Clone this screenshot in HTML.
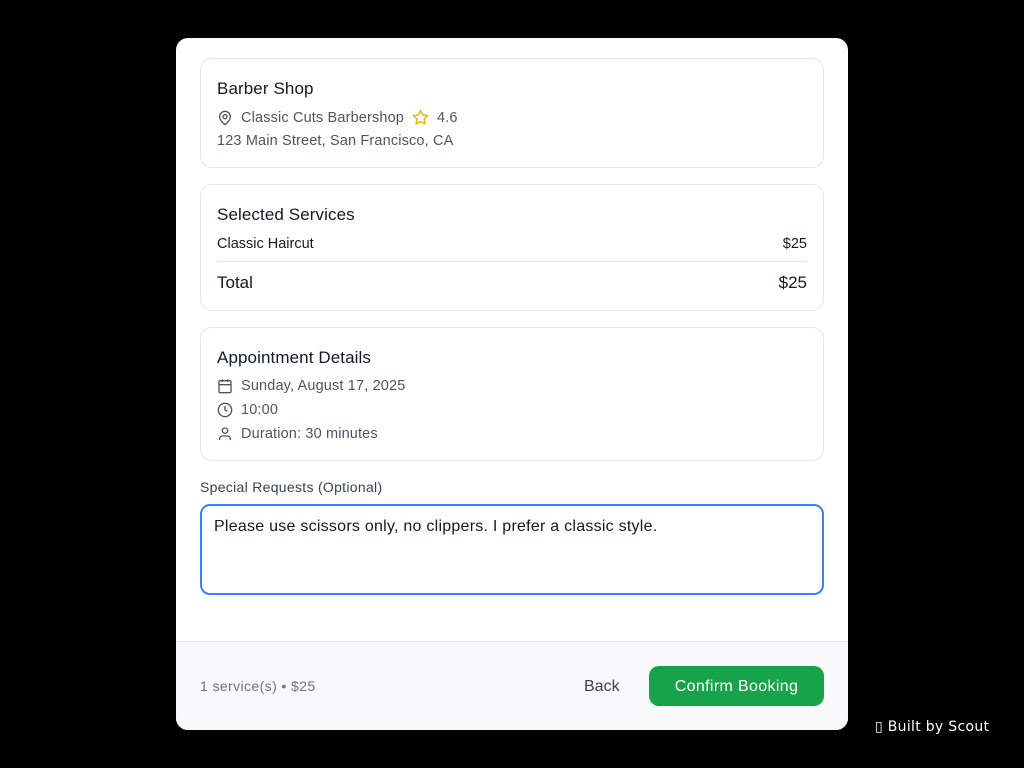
<!DOCTYPE html>
<html><head><style>
*{box-sizing:border-box;margin:0;padding:0}
body{width:1024px;height:768px;background:#000;font-family:"Liberation Sans",sans-serif;position:relative;overflow:hidden}
.modal{position:absolute;left:176px;top:38px;width:672px;height:692px;background:#fff;border-radius:12px;overflow:hidden}
.card{position:absolute;left:24px;width:624px;border:1px solid #e5e7eb;border-radius:12px;padding:0 16px}
.h{font-size:17px;color:#111827;position:absolute;left:16px;letter-spacing:0.1px}
.row{position:absolute;left:16px;font-size:14.5px;color:#4b5563;display:flex;align-items:center;letter-spacing:0.15px}
.row svg{margin-right:8px}
.foot{position:absolute;left:0;top:603px;width:672px;height:89px;background:#f8f9fa;border-top:1px solid #e5e7eb}
</style></head><body>
<div class="modal">
 <div class="card" style="top:20px;height:110px">
  <div class="h" style="top:20px">Barber Shop</div>
  <div class="row" style="top:50px"><svg width="16" height="16" viewBox="0 0 24 24" fill="none" stroke="#4b5563" stroke-width="2"><path d="M20 10c0 6-8 12-8 12S4 16 4 10a8 8 0 0116 0z"/><circle cx="12" cy="10" r="3"/></svg>Classic Cuts Barbershop<svg style="margin-left:8px" width="17" height="17" viewBox="0 0 24 24" fill="none" stroke="#eab308" stroke-width="2" stroke-linejoin="round"><path d="M12 2l3.1 6.3 6.9 1-5 4.9 1.2 6.8L12 17.8 5.8 21l1.2-6.8-5-4.9 6.9-1z"/></svg>4.6</div>
  <div class="row" style="top:74px;left:16px">123 Main Street, San Francisco, CA</div>
 </div>
 <div class="card" style="top:146px;height:127px">
  <div class="h" style="top:20px">Selected Services</div>
  <div style="position:absolute;left:16px;right:16px;top:51px;font-size:14.5px;color:#111827;display:flex;justify-content:space-between"><span>Classic Haircut</span><span>$25</span></div>
  <div style="position:absolute;left:16px;right:16px;top:76px;border-top:1px solid #e5e7eb"></div>
  <div style="position:absolute;left:16px;right:16px;top:88px;font-size:17px;color:#111827;display:flex;justify-content:space-between"><span>Total</span><span>$25</span></div>
 </div>
 <div class="card" style="top:289px;height:134px">
  <div class="h" style="top:20px">Appointment Details</div>
  <div class="row" style="top:50px"><svg width="16" height="16" viewBox="0 0 24 24" fill="none" stroke="#4b5563" stroke-width="2"><rect x="3" y="4" width="18" height="18" rx="2"/><path d="M16 2v4M8 2v4M3 10h18"/></svg>Sunday, August 17, 2025</div>
  <div class="row" style="top:74px"><svg width="16" height="16" viewBox="0 0 24 24" fill="none" stroke="#4b5563" stroke-width="2"><circle cx="12" cy="12" r="10"/><path d="M12 6v6l4 2"/></svg>10:00</div>
  <div class="row" style="top:98px"><svg width="16" height="16" viewBox="0 0 24 24" fill="none" stroke="#4b5563" stroke-width="2"><circle cx="12" cy="7" r="4"/><path d="M20 21v-2a4 4 0 00-4-4H8a4 4 0 00-4 4v2"/></svg>Duration: 30 minutes</div>
 </div>
 <div style="position:absolute;left:24px;top:441px;font-size:14px;color:#374151;letter-spacing:0.3px">Special Requests (Optional)</div>
 <div style="position:absolute;left:24px;top:466px;width:624px;height:91px;border:2px solid #3b82f6;border-radius:10px;padding:12px 12px;font-size:16px;color:#111827;letter-spacing:0.25px">Please use scissors only, no clippers. I prefer a classic style.</div>
 <div class="foot">
  <div style="position:absolute;left:24px;top:36px;font-size:14px;color:#6b7280;letter-spacing:0.4px">1 service(s) • $25</div>
  <div style="position:absolute;left:408px;top:36px;font-size:16px;color:#374151">Back</div>
  <div style="position:absolute;left:473px;top:24px;width:175px;height:40px;background:#16a34a;border-radius:10px;color:#fff;font-size:16px;text-align:center;line-height:41px;letter-spacing:0.35px">Confirm Booking</div>
 </div>
</div>
<div style="position:absolute;left:875px;top:719px;font-family:'DejaVu Sans',sans-serif;font-size:14px;color:#fff;letter-spacing:0.3px">▯ Built by Scout</div>
</body></html>
